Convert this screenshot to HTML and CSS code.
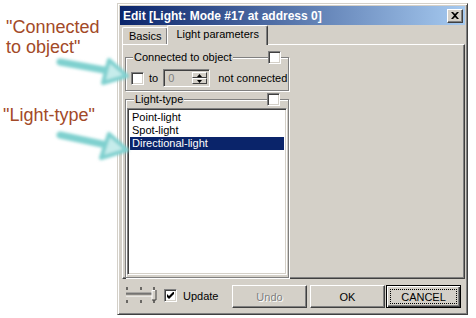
FILE: index.html
```html
<!DOCTYPE html>
<html lang="en">

<head>
    <meta charset="UTF-8">
    <title>Edit Light</title>
    <link rel="stylesheet" href="styles.css">
</head>

<body>
    <div class="stage">
        <div class="notes">
            <p class="note note-conn">"Connected<br>to object"</p>
            <p class="note note-type">"Light-type"</p>
        </div>

        <div class="dialog">
            <div class="titlebar">
                <span class="title">Edit [Light: Mode #17 at address 0]</span>
                <span class="close-btn">
                    <svg width="8" height="7" viewBox="0 0 8 7">
                        <path d="M0 0h2l2 2 2-2h2L5 3.5 8 7H6L4 5 2 7H0l3-3.5z" fill="#000"/>
                    </svg>
                </span>
            </div>

            <div class="tabs">
                <div class="tab">Basics</div>
                <div class="tab tab-active">Light parameters</div>
            </div>

            <div class="panel">
                <div class="group group-conn">
                    <div class="group-head">
                        <span class="group-label">Connected to object</span>
                        <span class="check"></span>
                    </div>
                    <div class="conn-row">
                        <span class="check"></span>
                        <span class="to-label">to</span>
                        <div class="spin">
                            <span class="spin-value">0</span>
                            <div class="spin-btns">
                                <span class="spin-btn">
                                    <svg width="5" height="3" viewBox="0 0 5 3"><path d="M2.5 0L5 3H0z" fill="#000"/></svg>
                                </span>
                                <span class="spin-btn">
                                    <svg width="5" height="3" viewBox="0 0 5 3"><path d="M0 0h5L2.5 3z" fill="#000"/></svg>
                                </span>
                            </div>
                        </div>
                        <span class="conn-state">not connected</span>
                    </div>
                </div>

                <div class="group group-type">
                    <div class="group-head">
                        <span class="group-label">Light-type</span>
                        <span class="check"></span>
                    </div>
                    <ul class="listbox">
                        <li>Point-light</li>
                        <li>Spot-light</li>
                        <li class="selected">Directional-light</li>
                    </ul>
                </div>
            </div>

            <div class="footer">
                <svg class="slider" width="32" height="17" viewBox="0 0 32 17">
                    <path d="M2 0v3M2 13v3M16 0v3M16 13v3M29 0v3M29 13v3" stroke="#000"/>
                    <path d="M1 6h26" stroke="#808080"/>
                    <path d="M1 7h26" stroke="#404040"/>
                    <path d="M1 9h26" stroke="#fff"/>
                    <rect x="1" y="8" width="26" height="1" fill="#d4d0c8"/>
                    <rect x="27" y="3" width="4" height="10" fill="#d4d0c8"/>
                    <path d="M27 12.5V3.5h3" stroke="#fff" fill="none"/>
                    <path d="M27 13h4V3" stroke="#404040" fill="none"/>
                </svg>
                <label class="update">
                    <span class="check check-on">
                        <svg width="7" height="7" viewBox="0 0 7 7"><path d="M0 2l2 2 5-5v3L2 7 0 5z" fill="#000"/></svg>
                    </span>
                    Update
                </label>
                <button class="btn btn-undo" disabled>Undo</button>
                <button class="btn btn-ok">OK</button>
                <button class="btn btn-cancel"><span class="focus">CANCEL</span></button>
            </div>
        </div>

        <!-- annotation arrows drawn over the page -->
        <svg class="arrows" width="476" height="318" viewBox="0 0 476 318">
            <defs>
                <filter id="soft" x="-20%" y="-20%" width="140%" height="140%">
                    <feGaussianBlur stdDeviation="1.6"/>
                </filter>
            </defs>
            <g filter="url(#soft)" stroke="#7fd0cf" stroke-linejoin="round" stroke-linecap="round">
                <path d="M60 62L104 70" stroke-width="7"/>
                <path d="M109 60L127 76L103 83z" stroke-width="4" fill="#c6eceb"/>
                <path d="M60 135L102 144" stroke-width="7"/>
                <path d="M109 134L127 150L101 158z" stroke-width="4" fill="#c6eceb"/>
            </g>
        </svg>
    </div>
</body>

</html>
```

FILE: styles.css
```css
* {
    margin: 0;
    padding: 0;
    box-sizing: border-box;
}

body {
    width: 476px;
    height: 318px;
    overflow: hidden;
    background: #fff;
    font-family: "Liberation Sans", Arial, sans-serif;
    font-size: 11px;
    color: #000;
}

.stage {
    position: relative;
    display: flex;
    height: 318px;
}

/* left hand notes */

.notes {
    width: 117px;
    flex-shrink: 0;
}

.note {
    color: #a34a28;
    font-size: 18px;
    line-height: 20px;
}

.note-conn {
    margin: 17px 0 0 6px;
}

.note-type {
    margin: 48px 0 0 3px;
}

.arrows {
    position: absolute;
    left: 0;
    top: 0;
    pointer-events: none;
}

/* dialog frame */

.dialog {
    margin-top: 3px;
    width: 351px;
    height: 312px;
    background: #d4d0c8;
    border: 1px solid;
    border-color: #d4d0c8 #404040 #404040 #d4d0c8;
    box-shadow: inset 1px 1px #fff, inset -1px -1px #808080;
    padding: 2px;
    display: flex;
    flex-direction: column;
}

.titlebar {
    height: 19px;
    flex-shrink: 0;
    display: flex;
    align-items: center;
    justify-content: space-between;
    padding: 0 2px 0 3px;
    background: linear-gradient(to right, #0a246a, #a6caf0);
    color: #fff;
    font-size: 12px;
    font-weight: bold;
}

.close-btn {
    width: 16px;
    height: 14px;
    display: flex;
    align-items: center;
    justify-content: center;
    background: #d4d0c8;
    border: 1px solid;
    border-color: #fff #404040 #404040 #fff;
    box-shadow: inset -1px -1px #808080;
}

/* tabs */

.tabs {
    height: 19px;
    flex-shrink: 0;
    display: flex;
    align-items: flex-end;
    padding-left: 2px;
    position: relative;
    z-index: 1;
}

.tab {
    height: 17px;
    padding: 2px 6px 0;
    border: 1px solid;
    border-bottom: none;
    border-color: #fff #404040 #fff #fff;
    box-shadow: inset -1px 0 #808080;
    border-radius: 2px 2px 0 0;
}

.tab-active {
    height: 20px;
    margin-bottom: -1px;
    margin-left: -1px;
    padding: 2px 8px 0;
    background: #d4d0c8;
}

.panel {
    height: 235px;
    flex-shrink: 0;
    margin-left: 2px;
    border: 1px solid;
    border-color: #fff #404040 #404040 #fff;
    box-shadow: inset -1px -1px #808080;
    padding: 12px 0 0 2px;
}

/* group boxes */

.group {
    width: 164px;
    border: 1px solid #808080;
    box-shadow: inset 1px 1px #fff, 1px 1px #fff;
}

.group-head {
    height: 13px;
    margin-top: -7px;
    display: flex;
    align-items: center;
    justify-content: space-between;
    padding: 0 7px 0 7px;
}

.group-label {
    background: #d4d0c8;
    padding: 0 1px;
    line-height: 13px;
}

.check {
    width: 13px;
    height: 13px;
    flex-shrink: 0;
    display: inline-flex;
    align-items: center;
    justify-content: center;
    background: #fff;
    border: 1px solid;
    border-color: #808080 #fff #fff #808080;
    box-shadow: inset 1px 1px #404040, inset -1px -1px #d4d0c8;
}

.conn-row {
    height: 18px;
    margin: 5px 0 3px;
    padding-left: 5px;
    display: flex;
    align-items: center;
}

.to-label {
    margin: 0 5px;
}

.spin {
    width: 47px;
    height: 18px;
    display: flex;
    border: 1px solid;
    border-color: #808080 #fff #fff #808080;
    box-shadow: inset 1px 1px #404040, inset -1px -1px #d4d0c8;
    padding: 2px;
}

.spin-value {
    flex: 1;
    color: #808080;
    padding-left: 2px;
    line-height: 12px;
}

.spin-btns {
    width: 15px;
    display: flex;
    flex-direction: column;
}

.spin-btn {
    flex: 1;
    display: flex;
    align-items: center;
    justify-content: center;
    background: #d4d0c8;
    border: 1px solid;
    border-color: #fff #404040 #404040 #fff;
}

.conn-state {
    margin-left: 8px;
}

.group-type {
    margin-top: 8px;
    padding: 0 1px 2px;
}

.listbox {
    list-style: none;
    margin-top: 2px;
    height: 167px;
    background: #fff;
    border: 1px solid;
    border-color: #808080 #fff #fff #808080;
    box-shadow: inset 1px 1px #404040, inset -1px -1px #d4d0c8;
    padding: 2px;
}

.listbox li {
    height: 13px;
    line-height: 13px;
    padding-left: 2px;
}

.listbox .selected {
    background: #0a246a;
    color: #fff;
}

/* bottom bar */

.footer {
    flex: 1;
    display: flex;
    align-items: flex-start;
    padding: 6px 4px 0 5px;
}

.slider {
    margin-top: 2px;
}

.update {
    display: flex;
    align-items: center;
    gap: 6px;
    margin: 4px 0 0 7px;
    height: 13px;
}

.btn {
    width: 75px;
    height: 23px;
    font-family: inherit;
    font-size: 11px;
    color: #000;
    background: #d4d0c8;
    border: 1px solid;
    border-color: #fff #404040 #404040 #fff;
    box-shadow: inset -1px -1px #808080;
}

.btn-undo {
    margin-left: auto;
    color: #808080;
    text-shadow: 1px 1px #fff;
}

.btn-ok {
    margin-left: 3px;
}

.btn-cancel {
    margin-left: 1px;
    border: 1px solid #000;
    box-shadow: inset 1px 1px #fff, inset -1px -1px #404040, inset -2px -2px #808080;
    padding: 3px;
}

.focus {
    display: flex;
    align-items: center;
    justify-content: center;
    height: 100%;
    border: 1px dotted #000;
}
```
